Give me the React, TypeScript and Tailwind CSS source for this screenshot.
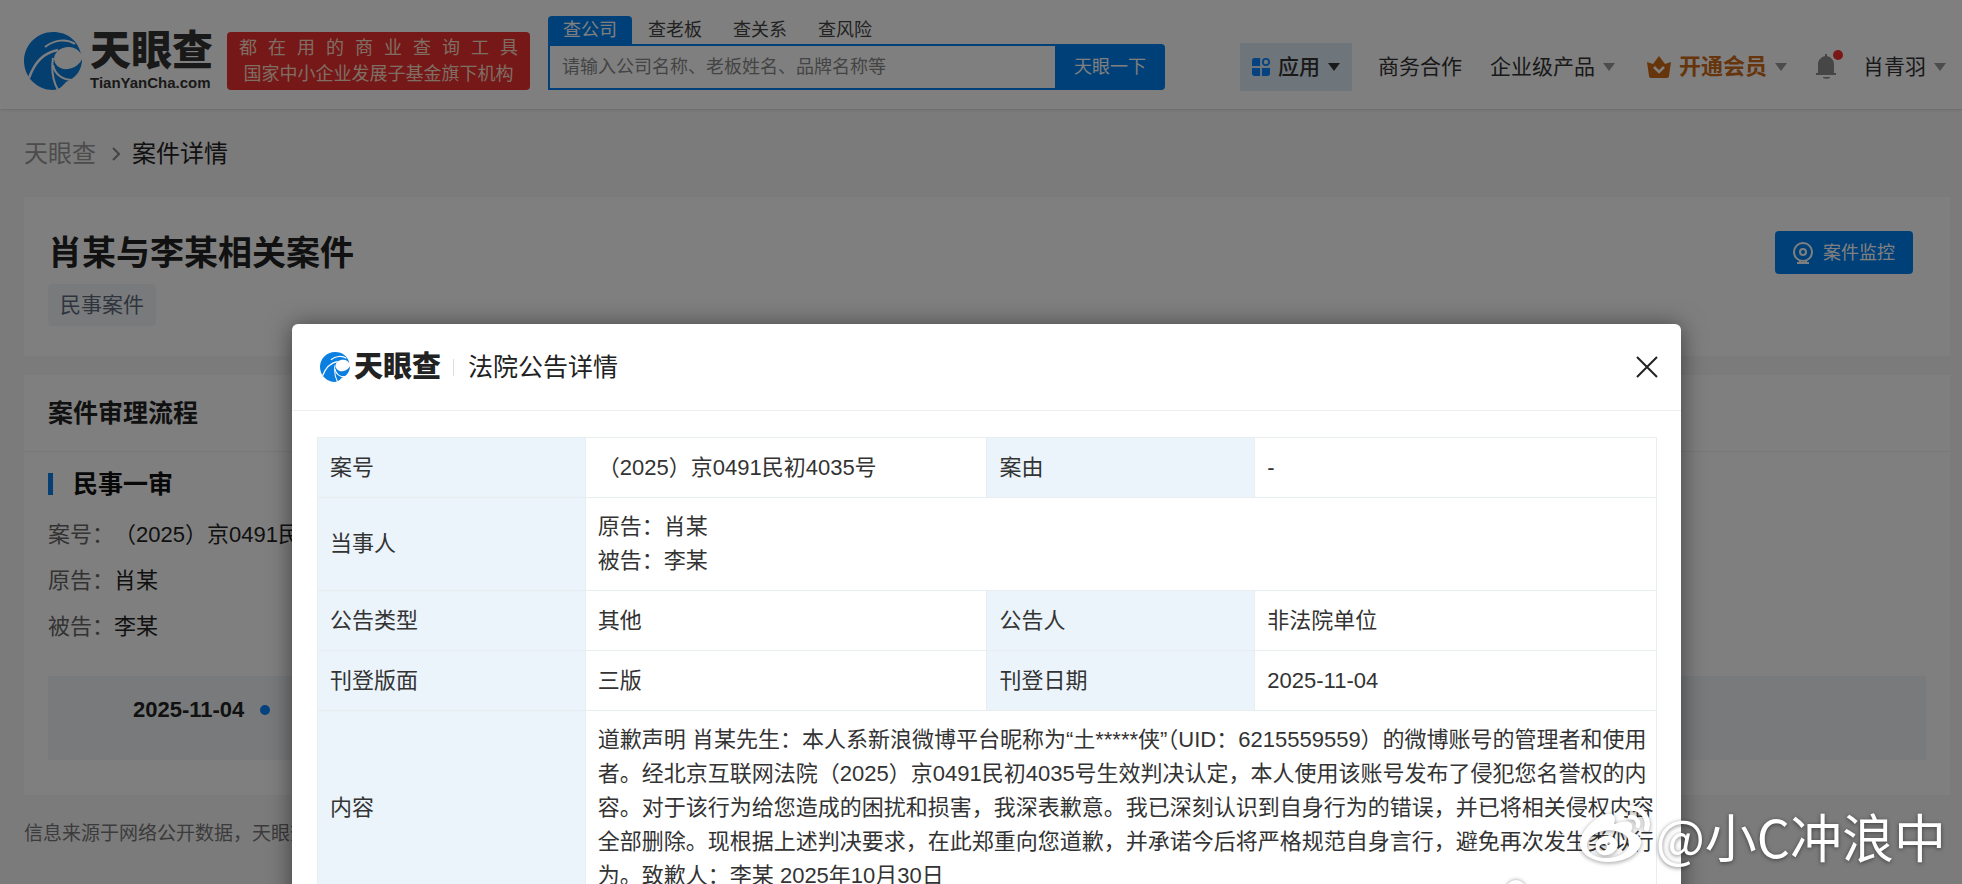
import type { ReactNode } from "react";
import { FaWeibo } from "react-icons/fa";

const searchTabs = ["查公司", "查老板", "查关系", "查风险"];

const slogan = ["都", "在", "用", "的", "商", "业", "查", "询", "工", "具"];

const caseInfo = [
  { label: "案号：", value: "（2025）京0491民初4035号" },
  { label: "原告：", value: "肖某" },
  { label: "被告：", value: "李某" },
];

const noticeLines = [
  "道歉声明 肖某先生：本人系新浪微博平台昵称为“土*****侠”（UID：6215559559）的微博账号的管理者和使用",
  "者。经北京互联网法院（2025）京0491民初4035号生效判决认定，本人使用该账号发布了侵犯您名誉权的内",
  "容。对于该行为给您造成的困扰和损害，我深表歉意。我已深刻认识到自身行为的错误，并已将相关侵权内容",
  "全部删除。现根据上述判决要求，在此郑重向您道歉，并承诺今后将严格规范自身言行，避免再次发生类似行",
  "为。致歉人：李某 2025年10月30日",
];

function LogoMark({ className }: { className: string }) {
  return (
    <svg viewBox="0 0 58 58" className={className} aria-hidden="true">
      <path
        fill="#0a7fe0"
        d="M29 0c15 0 25 9 28 22-2-4-7-7-12-7-9 0-14 5-15 11 0 7 6 12 14 11 7-1 12-5 14-10 0 11-6 19-16 23-4 5-8 8-13 8C13 58 0 45 0 29S13 0 29 0z"
      />
      <g fill="none" stroke="#fff" strokeWidth="2">
        <path d="M21 15C30 8 42 6 51 12" />
        <path strokeWidth="2.5" d="M5 46c6-16 14-25 29-28" />
        <path d="M34 58c-5-9-7-19-5-32" />
        <path d="M49 48c-10 0-18-5-20-15" />
      </g>
    </svg>
  );
}

function Caret({ className }: { className: string }) {
  return (
    <svg viewBox="0 0 12 8" className={`h-2 w-3 shrink-0 ${className}`} aria-hidden="true">
      <path fill="currentColor" d="M0 0h12L6 8z" />
    </svg>
  );
}

function AppsIcon() {
  return (
    <svg viewBox="0 0 20 20" className="size-[18px]" aria-hidden="true">
      <g fill="#0a84ff">
        <path d="M3 0h6v9H0V3a3 3 0 0 1 3-3zM0 11h9v9H3a3 3 0 0 1-3-3zM11 11h9v6a3 3 0 0 1-3 3h-6z" />
      </g>
      <circle cx="15.5" cy="4.5" r="3.5" fill="none" stroke="#0a84ff" strokeWidth="2" />
    </svg>
  );
}

function CrownIcon() {
  return (
    <svg viewBox="0 0 24 22" className="h-[22px] w-6" aria-hidden="true">
      <path fill="#cc6a18" d="M0 6l6 2 6-8 6 8 6-2-2 14c0 1-1 2-2 2H4c-1 0-2-1-2-2z" />
      <path fill="none" stroke="#fff" strokeWidth="2.5" d="M7 11l5 5 5-5" />
    </svg>
  );
}

function BellIcon() {
  return (
    <svg viewBox="0 0 22 26" className="h-[26px] w-[22px]" aria-hidden="true">
      <path
        fill="#8c8c8c"
        d="M10 0h2v2c4 1 7 4 7 8v9h2v2H1v-2h2v-9c0-4 3-7 7-8zM8 23h7v1c-2 1-5 1-7 0z"
      />
    </svg>
  );
}

function MonitorIcon() {
  return (
    <svg viewBox="0 0 20 22" className="h-[22px] w-5" fill="none" stroke="#fff" strokeWidth="2" aria-hidden="true">
      <circle cx="10" cy="10" r="9" />
      <circle cx="10" cy="10" r="3" />
      <path d="M7 18v3M13 18v3M4 21h12" />
    </svg>
  );
}

function Header() {
  return (
    <header className="relative flex h-[109px] items-center bg-white pl-6 pr-4 shadow-sm">
      <a href="#" className="flex shrink-0 items-center gap-2 pt-3" aria-label="天眼查">
        <LogoMark className="size-[58px]" />
        <span className="flex flex-col gap-1 text-[#333]">
          <span className="text-[41px] font-black leading-10">天眼查</span>
          <span className="font-['Liberation_Sans'] text-[15px] font-bold leading-4">TianYanCha.com</span>
        </span>
      </a>

      <div className="ml-3.5 mt-3 flex h-[58px] w-[303px] shrink-0 flex-col justify-center rounded-sm bg-[#ec3030] px-3 text-lg leading-[26px] text-[#ffdcc8]">
        <p className="flex justify-between">
          {slogan.map((char) => (
            <span key={char}>{char}</span>
          ))}
        </p>
        <p className="text-center whitespace-nowrap">国家中小企业发展子基金旗下机构</p>
      </div>

      <form className="ml-[18px] w-[617px] shrink-0 self-start pt-4 text-lg" onSubmit={(e) => e.preventDefault()}>
        <div className="flex gap-px">
          {searchTabs.map((tab, i) => (
            <button
              key={tab}
              type="button"
              className={
                i === 0
                  ? "h-7 w-[84px] rounded-t-sm bg-[#0080f0] leading-7 text-white"
                  : "h-7 w-[84px] leading-7 text-[#444]"
              }
            >
              {tab}
            </button>
          ))}
        </div>
        <div className="flex h-[46px]">
          <input
            type="text"
            aria-label="搜索"
            placeholder="请输入公司名称、老板姓名、品牌名称等"
            className="min-w-0 flex-1 border-2 border-r-0 border-[#0080f0] bg-white px-3 placeholder:text-[#888]"
          />
          <button type="submit" className="w-[110px] rounded-r-sm bg-[#0080f0] text-white">
            天眼一下
          </button>
        </div>
      </form>

      <nav className="ml-auto flex shrink-0 items-center pt-6 text-[21px] leading-[30px] text-[#333]">
        <button type="button" className="flex h-12 items-center gap-2 bg-[#dcebf6] px-3">
          <AppsIcon />
          <span className="font-medium">应用</span>
          <Caret className="text-[#333]" />
        </button>
        <a href="#" className="ml-[26px]">
          商务合作
        </a>
        <a href="#" className="ml-7 flex items-center gap-2">
          企业级产品
          <Caret className="text-[#999]" />
        </a>
        <a href="#" className="ml-8 flex items-center gap-2 text-[22px] font-bold text-[#cc6a18]">
          <CrownIcon />
          开通会员
          <Caret className="text-[#999]" />
        </a>
        <button type="button" className="relative ml-7" aria-label="消息">
          <BellIcon />
          <span className="absolute -right-1.5 -top-1 size-2.5 rounded-full bg-[#f5302e]" />
        </button>
        <a href="#" className="ml-[26px] flex items-center gap-2">
          肖青羽
          <Caret className="text-[#999]" />
        </a>
      </nav>
    </header>
  );
}

function CasePage() {
  return (
    <div className="min-h-screen bg-[#f7f7f7]">
      <Header />

      <main className="pl-6 pr-3">
        <div className="flex h-[88px] items-center gap-3 pt-0.5 text-2xl">
          <a href="#" className="text-[#999]">
            天眼查
          </a>
          <svg viewBox="0 0 8 14" className="ml-1 h-3.5 w-2" fill="none" stroke="#888" strokeWidth="2" aria-hidden="true">
            <path d="M1 1l6 6-6 6" />
          </svg>
          <span className="text-[#222]">案件详情</span>
        </div>

        <section className="flex h-[159px] items-start justify-between bg-white pl-6 pr-[37px] pt-[34px]">
          <div>
            <h1 className="text-[34px] font-bold leading-[44px] text-[#222]">肖某与李某相关案件</h1>
            <span className="mt-[9px] inline-block rounded-sm bg-[#f1f5f8] px-3 text-[21px] leading-[42px] text-[#5f6b7c]">
              民事案件
            </span>
          </div>
          <button
            type="button"
            className="flex h-[43px] items-center gap-2.5 rounded-sm bg-[#0080f0] px-[18px] text-lg text-white"
          >
            <MonitorIcon />
            案件监控
          </button>
        </section>

        <section className="mt-[19px] h-[420px] bg-white">
          <h2 className="border-b border-[#f0f0f0] px-6 text-[25px] font-bold leading-[76px] text-[#222]">
            案件审理流程
          </h2>
          <div className="px-6 pt-4">
            <h3 className="flex items-center gap-5 text-[25px] font-bold leading-8 text-[#111]">
              <span className="h-[22px] w-[5px] bg-[#0a7fe6]" />
              民事一审
            </h3>
            <dl className="mt-3 text-[22px] leading-[46px]">
              {caseInfo.map((item) => (
                <div key={item.label} className="flex">
                  <dt className="text-[#666]">{item.label}</dt>
                  <dd className="text-[#222]">{item.value}</dd>
                </div>
              ))}
            </dl>
            <div className="mt-[26px] flex h-[84px] items-start gap-4 bg-[#f1f5f7] pl-[85px] pt-[18px]">
              <time className="text-[22px] font-bold leading-8 text-[#222]">2025-11-04</time>
              <span className="mt-[11px] size-2.5 rounded-full bg-[#0a84ff]" />
            </div>
          </div>
        </section>

        <p className="pt-6 text-[19px] leading-[30px] text-[#777]">信息来源于网络公开数据，天眼查</p>
      </main>
    </div>
  );
}

function Label({ children }: { children: ReactNode }) {
  return (
    <th scope="row" className="border border-[#e8edf0] bg-[#ebf3fb] px-3 py-3 text-left font-normal">
      {children}
    </th>
  );
}

function Value({ children, colSpan }: { children: ReactNode; colSpan?: number }) {
  return (
    <td colSpan={colSpan} className="border border-[#e8edf0] py-3 pl-3">
      {children}
    </td>
  );
}

function NoticeDialog() {
  return (
    <div
      role="dialog"
      aria-modal="true"
      aria-labelledby="notice-title"
      className="h-[700px] w-full max-w-[1389px] rounded-md bg-white shadow-[0_2px_24px_rgba(0,0,0,0.5)]"
    >
      <div className="flex h-[87px] items-center border-b border-[#eee] pl-7 pr-[23px]">
        <LogoMark className="size-[30px]" />
        <span className="ml-1 text-[29px] font-black leading-8 text-[#222]">天眼查</span>
        <span className="ml-3 mr-3.5 h-[17px] w-px bg-[#ddd]" />
        <h2 id="notice-title" className="text-[25px] leading-8 text-[#222]">
          法院公告详情
        </h2>
        <button type="button" className="ml-auto" aria-label="关闭">
          <svg viewBox="0 0 22 22" className="size-[22px]" fill="none" stroke="#222" strokeWidth="2" aria-hidden="true">
            <path d="M1 1l20 20M21 1L1 21" />
          </svg>
        </button>
      </div>

      <div className="pl-[25px] pr-6 pt-[26px]">
        <table className="w-full table-fixed border-collapse text-[22px] leading-[34px] text-[#333]">
          <colgroup>
            <col className="w-[20%]" />
            <col className="w-[30%]" />
            <col className="w-[20%]" />
            <col className="w-[30%]" />
          </colgroup>
          <tbody>
            <tr className="h-[60px]">
              <Label>案号</Label>
              <Value>（2025）京0491民初4035号</Value>
              <Label>案由</Label>
              <Value>-</Value>
            </tr>
            <tr>
              <Label>当事人</Label>
              <Value colSpan={3}>
                原告：肖某
                <br />
                被告：李某
              </Value>
            </tr>
            <tr className="h-[60px]">
              <Label>公告类型</Label>
              <Value>其他</Value>
              <Label>公告人</Label>
              <Value>非法院单位</Value>
            </tr>
            <tr className="h-[60px]">
              <Label>刊登版面</Label>
              <Value>三版</Value>
              <Label>刊登日期</Label>
              <Value>2025-11-04</Value>
            </tr>
            <tr>
              <Label>内容</Label>
              <Value colSpan={3}>
                {noticeLines.map((line) => (
                  <p key={line} className="whitespace-nowrap">
                    {line}
                  </p>
                ))}
              </Value>
            </tr>
          </tbody>
        </table>
      </div>
    </div>
  );
}

export default function App() {
  return (
    <div className="relative h-screen overflow-hidden font-['Liberation_Sans','Noto_Sans_CJK_SC',sans-serif]">
      <CasePage />

      <div className="absolute inset-0 flex justify-center overflow-hidden bg-black/50 pl-[11px] pt-[324px]">
        <NoticeDialog />
      </div>

      {/* repost watermark, with the top edge of a second one below it */}
      <div className="absolute bottom-3 right-4 flex items-center gap-1.5 text-[52px] leading-[72px] text-white [text-shadow:0_1px_4px_rgba(0,0,0,0.5)]">
        <FaWeibo className="size-[70px] drop-shadow-[0_1px_2px_rgba(0,0,0,0.4)]" />
        <span className="font-['Noto_Sans_CJK_SC',sans-serif]">@小C冲浪中</span>
      </div>
      <span className="absolute -bottom-4 right-[436px] size-5 rounded-full bg-white shadow-[0_0_4px_rgba(0,0,0,0.4)]" />
    </div>
  );
}
